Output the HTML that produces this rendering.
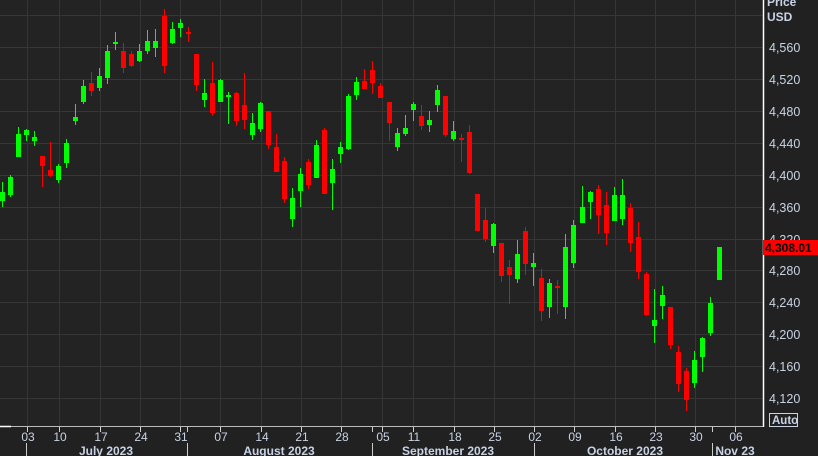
<!DOCTYPE html>
<html><head><meta charset="utf-8"><style>
html,body{margin:0;padding:0;background:#212121;width:818px;height:456px;overflow:hidden}
svg{display:block}
text{font-family:"Liberation Sans",sans-serif}
</style></head><body>
<svg id="s" width="818" height="456" xmlns="http://www.w3.org/2000/svg">
<rect x="0" y="0" width="818" height="456" fill="#212121"/>
<rect x="0" y="0" width="763" height="426" fill="#222322"/>
<g id="grid" stroke="#363636" stroke-width="1"></g>
<g id="c"></g>
<line x1="763.5" y1="0" x2="763.5" y2="427" stroke="#fff" stroke-width="1.5"/>
<line x1="0" y1="426.5" x2="763" y2="426.5" stroke="#bbb" stroke-width="1"/>
<line x1="0" y1="426.5" x2="11" y2="426.5" stroke="#fff" stroke-width="1.5"/>
<g id="ticks" stroke="#ccc" stroke-width="1"></g>
<g fill="#c9d3e6" font-size="12.5">
<text x="767" y="6" font-weight="bold" font-size="12">Price</text>
<text x="767" y="21" font-weight="bold" font-size="12">USD</text>
<text x="769" y="52">4,560</text><text x="769" y="84">4,520</text><text x="769" y="116">4,480</text>
<text x="769" y="148">4,440</text><text x="769" y="180">4,400</text><text x="769" y="212">4,360</text>
<text x="769" y="244">4,320</text><text x="769" y="275">4,280</text><text x="769" y="307">4,240</text>
<text x="769" y="339">4,200</text><text x="769" y="371">4,160</text><text x="769" y="403">4,120</text>
</g>
<rect x="763" y="240" width="55" height="15" fill="#ff0000"/>
<text x="765" y="252" font-size="12" font-weight="bold" fill="#000">4,308.01</text>
<rect x="769.5" y="413.5" width="28" height="13" fill="none" stroke="#c9d3e6"/>
<text x="772" y="424" font-size="11.5" font-weight="bold" fill="#c9d3e6">Auto</text>
<g fill="#c9d3e6" font-size="12" text-anchor="middle">
<text x="28" y="441">03</text><text x="60" y="441">10</text><text x="101" y="441">17</text><text x="141" y="441">24</text>
<text x="181" y="441">31</text><text x="221" y="441">07</text><text x="262" y="441">14</text><text x="302" y="441">21</text>
<text x="342" y="441">28</text><text x="383" y="441">05</text><text x="414" y="441">11</text><text x="455" y="441">18</text>
<text x="495" y="441">25</text><text x="535" y="441">02</text><text x="575" y="441">09</text><text x="616" y="441">16</text>
<text x="656" y="441">23</text><text x="696" y="441">30</text><text x="736" y="441">06</text>
</g>
<g fill="#c9d3e6" font-size="12" font-weight="bold" text-anchor="middle">
<text x="106" y="455">July 2023</text><text x="279" y="455">August 2023</text>
<text x="448" y="455">September 2023</text><text x="625" y="455">October 2023</text><text x="735" y="455">Nov 23</text>
</g>
</svg>
<script>
var NS="http://www.w3.org/2000/svg";
function el(p,t,a){var e=document.createElementNS(NS,t);for(var k in a)e.setAttribute(k,a[k]);p.appendChild(e);return e;}
var g=document.getElementById('grid');
[15,47,79,111,143,175,207,239,270,302,334,366,398].forEach(function(y){el(g,'line',{x1:0,x2:763,y1:y+.5,y2:y+.5});});
var vx=[27,59,100,140,180,220,261,301,341,382,413,454,494,534,574,615,655,695,735];
vx.forEach(function(x){el(g,'line',{x1:x+.5,x2:x+.5,y1:0,y2:426});});
var t=document.getElementById('ticks');
vx.forEach(function(x){el(t,'line',{x1:x+.5,x2:x+.5,y1:427,y2:432});});
[26,187,372,534,712].forEach(function(x){el(t,'line',{x1:x+.5,x2:x+.5,y1:443,y2:456});});
[187,372,712].forEach(function(x){el(t,'line',{x1:x+.5,x2:x+.5,y1:427,y2:432});});
var d=[
[2,182,207,192,201,1],[10,175,197,177,195,1],[18,127,157,134,157,1],[26,129,141,130,135,1],[34,131,146,137,141,1],
[42,156,187,156,166,0],[50,142,177,170,176,0],[58,164,183,166,180,1],[66,139,168,143,163,1],[75,104,125,117,121,1],
[83,80,104,86,102,1],[91,72,96,83,91,0],[99,68,91,76,88,1],[107,45,84,51,78,1],[115,32,50,42,44,1],
[123,43,73,51,68,0],[131,51,67,54,66,0],[139,44,62,51,61,1],[147,30,54,41,51,1],[155,29,57,41,48,1],
[164,9,73,16,66,0],[172,22,44,29,43,1],[180,19,37,23,28,1],[188,27,42,32,34,0],[196,54,91,54,85,0],
[204,79,107,93,100,1],[212,62,116,83,113,0],[220,79,102,80,102,1],[228,92,124,95,97,1],[236,92,126,93,121,0],
[244,73,129,105,120,0],[252,113,140,123,135,1],[260,102,132,103,129,1],[268,111,149,111,145,0],[276,134,172,147,172,0],
[284,157,203,161,199,0],[292,188,227,198,219,1],[300,168,207,174,191,1],[308,159,189,162,185,0],[316,140,178,145,178,1],
[324,128,194,130,194,0],[332,159,210,169,183,1],[340,142,163,147,154,1],[348,94,150,96,149,1],[356,77,100,82,95,1],
[364,69,89,81,89,0],[372,61,94,70,83,0],[380,83,98,86,98,0],[389,102,141,102,123,0],[397,128,151,133,147,1],
[405,115,136,128,134,1],[413,102,121,104,110,1],[421,105,130,116,126,0],[429,111,132,120,125,1],[437,85,112,90,105,1],
[445,96,137,96,135,0],[453,121,141,131,139,1],[461,134,162,138,140,0],[469,125,174,132,173,0],[477,194,231,194,231,0],
[485,208,242,220,239,0],[493,223,253,224,246,1],[501,243,282,243,276,0],[509,260,304,267,275,0],[517,240,283,254,279,1],
[525,227,275,231,264,0],[533,253,286,263,267,1],[541,269,321,278,311,0],[549,279,318,283,307,1],[557,280,314,286,288,0],
[565,234,319,247,307,1],[573,220,268,225,263,1],[582,186,223,207,223,1],[590,191,219,192,202,1],[598,185,234,189,215,0],
[606,192,245,205,233,0],[614,187,221,195,221,1],[622,179,225,195,219,1],[630,203,252,208,243,0],[638,222,279,237,272,0],
[646,272,316,274,315,0],[654,289,343,320,326,1],[662,286,319,295,306,1],[670,307,349,307,345,0],[678,346,392,352,384,0],
[686,368,411,371,400,0],[694,351,388,360,383,1],[702,337,372,338,357,1],[710,297,336,303,333,1],[719,247,280,247,280,1]
];
var c=document.getElementById('c');
d.forEach(function(k){var col=k[5]?'#00ff00':'#ff0000';
el(c,'rect',{x:k[0],y:k[1],width:1,height:k[2]-k[1],fill:col});
el(c,'rect',{x:k[0]-2,y:k[3],width:5,height:Math.max(2,k[4]-k[3]),fill:col});});
</script>
</body></html>
